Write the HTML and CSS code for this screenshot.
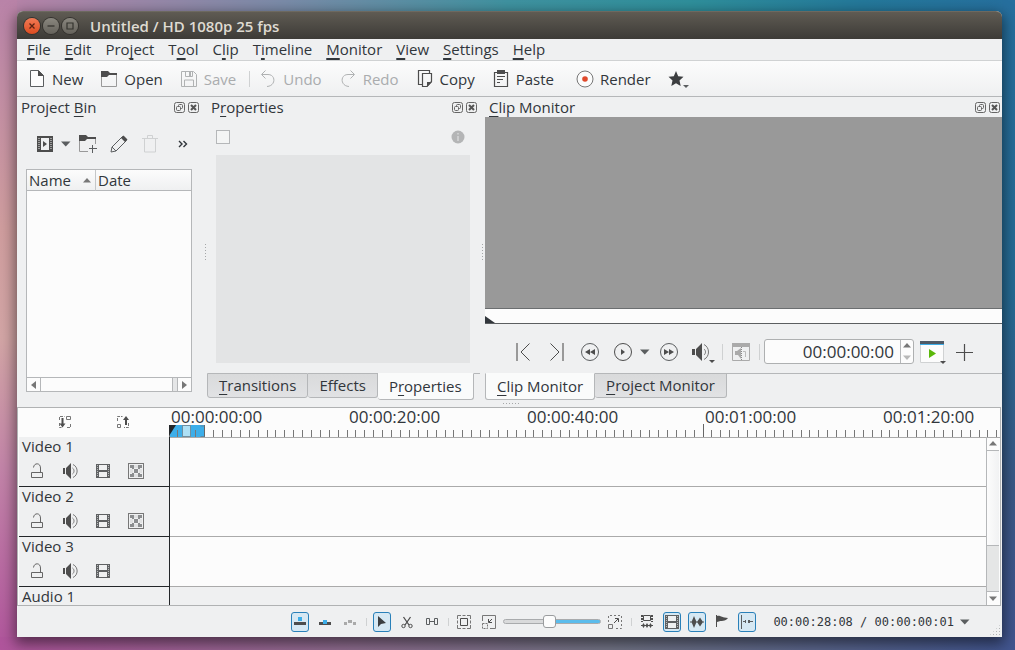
FILE: index.html
```html
<!DOCTYPE html>
<html lang="en">
<head>
<meta charset="utf-8">
<title>Untitled / HD 1080p 25 fps</title>
<link rel="stylesheet" href="styles.css">
</head>
<body>
<svg class="defs" aria-hidden="true">
  <symbol id="caret" viewBox="0 0 10 6"><path d="M0 .5h9.500L4.750 5.500z" fill="#5b5e60"/></symbol>
  <symbol id="tri-up" viewBox="0 0 8 5"><path d="M0 4.500h8L4 0z" fill="#777"/></symbol>
  <symbol id="tri-down" viewBox="0 0 8 5"><path d="M0 .5h8L4 5z" fill="#777"/></symbol>
  <symbol id="tri-left" viewBox="0 0 5 8"><path d="M5 0v8L0 4z" fill="#777"/></symbol>
  <symbol id="tri-right" viewBox="0 0 5 8"><path d="M0 0v8l5-4z" fill="#777"/></symbol>
  <symbol id="float" viewBox="0 0 11 11"><rect x=".5" y=".5" width="10" height="10" rx="2" fill="none" stroke="#666"/><rect x="4.500" y="2.500" width="4" height="4" rx="1" fill="none" stroke="#666"/><rect x="2.500" y="4.500" width="4" height="4" rx="1" fill="#eff0f1" stroke="#666"/></symbol>
  <symbol id="close" viewBox="0 0 11 11"><rect x=".5" y=".5" width="10" height="10" rx="2" fill="none" stroke="#666"/><path d="M3 3l5 5M8 3l-5 5" stroke="#555" stroke-width="2"/></symbol>
  <symbol id="lock" viewBox="0 0 16 16"><path d="M2.500 9.500h11v5h-11zM4.500 4.500c.5-5 7-5 7 .5v4.500" fill="none" stroke="#666"/></symbol>
  <symbol id="speaker" viewBox="0 0 16 16"><path d="M1 5h2v6H1zM4 5l5-5v16l-5-5z" fill="#4d4d4d"/><path d="M10.500 5c2 1.500 2 4.500 0 6M11 1.500c5.500 2.500 5.500 10.500 0 13" fill="none" stroke="#777"/></symbol>
  <symbol id="film" viewBox="0 0 16 16"><path d="M1 1h14v14H1z" fill="#5f6163"/><path d="M4 2h8v5H4zM4 9h8v5H4z" fill="#eff0f1"/><path d="M2.500 2v12M13.500 2v12" stroke="#b9bbbc" stroke-dasharray="1 1"/></symbol>
  <symbol id="alpha" viewBox="0 0 16 16"><rect x=".5" y=".5" width="15" height="15" fill="none" stroke="#777"/><path d="M2 2h4v3H2zM10 2h4v3h-4zM6 6h4v4H6zM2 11h4v3H2zM10 11h4v3h-4zM4 5h2v1H4zM10 5h2v1h-2zM4 10h2v1H4zM10 10h2v1h-2z" fill="#8b8d8f"/><path d="M6 2h4v3H6zM2 6h3v4H2zM11 6h3v4h-3zM6 11h4v3H6z" fill="#e0e1e2"/></symbol>
</svg>

<main class="window">
  <header class="titlebar">
    <button class="wm wm-close" aria-label="Close"><svg viewBox="0 0 16 16"><path d="M5.500 5.500l5 5M10.500 5.500l-5 5" stroke="#5a2313" stroke-width="1.300"/></svg></button>
    <button class="wm" aria-label="Minimize"><svg viewBox="0 0 16 16"><path d="M4.500 8h7" stroke="#35342f" stroke-width="1.300"/></svg></button>
    <button class="wm" aria-label="Maximize"><svg viewBox="0 0 16 16"><path d="M5 5h6v6H5z" fill="none" stroke="#35342f" stroke-width="1.200"/></svg></button>
    <h1 class="title">Untitled / HD 1080p 25 fps</h1>
  </header>

  <nav class="menubar">
    <button><u>F</u>ile</button><button><u>E</u>dit</button><button>Pro<u>j</u>ect</button><button>T<u>o</u>ol</button><button>C<u>l</u>ip</button><button>T<u>i</u>meline</button><button><u>M</u>onitor</button><button><u>V</u>iew</button><button><u>S</u>ettings</button><button><u>H</u>elp</button>
  </nav>

  <div class="toolbar">
    <button><svg class="ic18" viewBox="0 0 18 18"><path d="M2.500.5h8l5 5v11h-13z" fill="#fcfcfc" stroke="#5b5e60"/><path d="M10 0v6h6z" fill="#4d4d4d"/></svg>New</button>
    <button><svg class="ic18" viewBox="0 0 18 18"><path d="M1.500 3.500h15v13h-15z" fill="none" stroke="#999"/><path d="M1 1h7l2 2h7v2H9L7 7H1z" fill="#4d4d4d"/></svg>Open</button>
    <button disabled><svg class="ic18" viewBox="0 0 18 18"><path d="M1.500 1.500h12l3 3v12h-15zM5.500 1.500v5h7v-5M4.500 16v-6h9v6" fill="none" stroke="#b0b2b3"/><path d="M9 2h2v4H9z" fill="#b0b2b3"/></svg>Save</button>
    <span class="sep"></span>
    <button disabled><svg class="ic18" viewBox="0 0 18 18"><path d="M6.500.5l-4 4 4 4M3 4.500h6c8 0 8 11.500-1 12" fill="none" stroke="#b0b2b3"/></svg>Undo</button>
    <button disabled><svg class="ic18" viewBox="0 0 18 18"><path d="M11.500.5l4 4-4 4M15 4.500H9c-8 0-8 11.500 1 12" fill="none" stroke="#b0b2b3"/></svg>Redo</button>
    <button><svg class="ic18" viewBox="0 0 18 18"><path d="M6 14.500H2.500v-14h11V3M6.500 3.500h9v8l-4.500 5H6.500z" fill="none" stroke="#4d4d4d" stroke-width="1.200"/><path d="M11 17v-5h5z" fill="#4d4d4d"/></svg>Copy</button>
    <button><svg class="ic18" viewBox="0 0 18 18"><path d="M2.500 2.500h13v14h-13z" fill="none" stroke="#4d4d4d" stroke-width="1.200"/><path d="M5 0h8v4H5zM5 6h8v1H5zM5 9h6v1H5zM5 12h3v1H5z" fill="#4d4d4d"/></svg>Paste</button>
    <button class="render"><svg class="ic18" viewBox="0 0 18 18"><circle cx="9" cy="9" r="8" fill="#fcfcfc" stroke="#777"/><circle cx="9" cy="9" r="2.800" fill="#e04a2c"/></svg>Render</button>
    <button class="fav" aria-label="Favorites"><svg viewBox="0 0 22 18"><path d="M8 1l2.200 5.200 5.300.6-4 3.700 1.200 5.500L8 13.200 3.300 16l1.200-5.500-4-3.700 5.300-.6z" fill="#3c3e40"/><path d="M15 15h6l-3 3z" fill="#5b5e60"/></svg></button>
  </div>

  <div class="docks">
    <section class="dock bin">
      <header class="dock-head"><h2>Project <u>B</u>in</h2><button aria-label="Float"><svg><use href="#float"/></svg></button><button aria-label="Close dock"><svg><use href="#close"/></svg></button></header>
      <div class="bin-tools">
        <button aria-label="Add clip"><svg class="ic18" viewBox="0 0 18 18"><path d="M1 1h16v16H1z" fill="#4d4d4d"/><path d="M5 3h8v12H5z" fill="#eff0f1"/><path d="M3 3v12M15 3v12" stroke="#eff0f1" stroke-dasharray="1 1"/><path d="M7 6v6l4-3z" fill="#4d4d4d"/></svg></button>
        <button aria-label="Add clip menu"><svg class="caret"><use href="#caret"/></svg></button>
        <button aria-label="Create folder"><svg class="ic18" viewBox="0 0 18 18"><path d="M9 16.500H.5v-13h16V9" fill="none" stroke="#999"/><path d="M0 0h7l2 2h8v2H8L6 6H0z" fill="#4d4d4d"/><path d="M10 13.500h8M13.500 10v8" stroke="#5b5e60"/></svg></button>
        <button aria-label="Edit clip"><svg class="ic18" viewBox="0 0 18 18"><path d="M1 17l1-5L12.500 1.500l4 4L6 16zM2 12l4 4" fill="none" stroke="#5b5e60"/><path d="M11 3l2.500-2.500 4 4L15 7z" fill="#4d4d4d"/></svg></button>
        <button disabled aria-label="Delete"><svg class="ic18" viewBox="0 0 18 18"><path d="M1 3.500h16M6.500 3V.5h5V3M3.500 4v13h11V4" fill="none" stroke="#cfd1d2"/></svg></button>
        <button class="more" aria-label="More"><svg viewBox="0 0 10 8"><path d="M1 1l3 3-3 3M5.500 1l3 3-3 3" fill="none" stroke="#31363b" stroke-width="1.400"/></svg></button>
      </div>
      <div class="bin-list">
        <table>
          <thead><tr><th class="name"><span>Name<svg class="tri-h"><use href="#tri-up"/></svg></span></th><th>Date</th></tr></thead>
        </table>
        <div class="hscroll"><button aria-label="Scroll left"><svg class="tri-v"><use href="#tri-left"/></svg></button><span class="hthumb"></span><button aria-label="Scroll right"><svg class="tri-v"><use href="#tri-right"/></svg></button></div>
      </div>
    </section>
    <div class="splitter"><span></span></div>
    <section class="dock props">
      <header class="dock-head"><h2>P<u>r</u>operties</h2><button aria-label="Float"><svg><use href="#float"/></svg></button><button aria-label="Close dock"><svg><use href="#close"/></svg></button></header>
      <div class="props-tools"><input type="checkbox" aria-label="Enable effects"><svg class="info" viewBox="0 0 14 14"><circle cx="7" cy="7" r="6.500" fill="#b4b5b6"/><path d="M7 3v1.500M7 6v5" stroke="#d5d6d7" stroke-width="1.500"/></svg></div>
      <div class="props-body"></div>
      <div class="tabs" role="tablist"><button role="tab"><u>T</u>ransitions</button><button role="tab">Effects</button><button role="tab" class="active" aria-selected="true">P<u>r</u>operties</button><span class="tab-rest"></span></div>
    </section>
    <div class="splitter"><span></span></div>
    <section class="dock monitor">
      <header class="dock-head"><h2><u>C</u>lip Monitor</h2><button aria-label="Float"><svg><use href="#float"/></svg></button><button aria-label="Close dock"><svg><use href="#close"/></svg></button></header>
      <div class="screen"></div>
      <div class="seek"><svg viewBox="0 0 10 7"><path d="M0 0l10 7H0z" fill="#31363b"/></svg></div>
      <div class="controls">
        <button aria-label="Zone start"><svg viewBox="0 0 20 20"><path d="M3 1v18" stroke="#999" stroke-width="2"/><path d="M15.500 1.500L7 10l8.500 8.500" fill="none" stroke="#4d4d4d"/></svg></button>
        <button aria-label="Zone end"><svg viewBox="0 0 20 20"><path d="M16 1v18" stroke="#999" stroke-width="2"/><path d="M3.500 1.500L12 10l-8.500 8.500" fill="none" stroke="#4d4d4d"/></svg></button>
        <button aria-label="Rewind"><svg viewBox="0 0 20 20"><circle cx="10" cy="10" r="8.500" fill="none" stroke="#5b5e60"/><path d="M10 7v6l-5-3zM15 7v6l-5-3z" fill="#4d4d4d"/></svg></button>
        <button aria-label="Play"><svg viewBox="0 0 20 20"><circle cx="10" cy="10" r="8.500" fill="none" stroke="#4d4d4d"/><path d="M8 7v6l4-3z" fill="#4d4d4d"/></svg></button>
        <button class="play-menu" aria-label="Play menu"><svg class="caret"><use href="#caret"/></svg></button>
        <button aria-label="Forward"><svg viewBox="0 0 20 20"><circle cx="10" cy="10" r="8.500" fill="none" stroke="#5b5e60"/><path d="M10 7v6l5-3zM5 7v6l5-3z" fill="#4d4d4d"/></svg></button>
        <button class="vol" aria-label="Volume"><svg viewBox="0 0 24 20"><path d="M0 7h3v6H0zM4 7l6-6v18l-6-6z" fill="#4d4d4d"/><path d="M12 7c2 1.500 2 4.500 0 6M12 2.500c6 3 6 12 0 15" fill="none" stroke="#777"/><path d="M17 18h6l-3 3z" fill="#4d4d4d"/></svg></button>
        <span class="sep"></span>
        <button disabled aria-label="Split view"><svg viewBox="0 0 20 20"><path d="M1.500 1.500h17v17h-17z" fill="none" stroke="#aaa"/><path d="M1 1h18v4H1zM4 9h2l4-3v11l-3-4H4z" fill="#aaa"/><path d="M10.500 5v14" stroke="#888" stroke-dasharray="1 1"/><path d="M12 9.500h2.500V15" fill="none" stroke="#bbb"/></svg></button>
        <span class="sep"></span>
        <div class="spin"><input type="text" value="00:00:00:00" aria-label="Position"><div class="spin-btns"><button aria-label="Up"><svg class="tri-h"><use href="#tri-up"/></svg></button><button disabled aria-label="Down"><svg class="tri-h"><use href="#tri-down"/></svg></button></div></div>
        <button class="zoneplay" aria-label="Play zone"><svg viewBox="0 0 26 22"><path d="M0 0h24v22H0z" fill="#fcfcfc"/><path d="M0 0h24v3H0z" fill="#4f5a66"/><path d="M0 3h24v1H0z" fill="#3daee9"/><path d="M.5 4v17.500h23V4" fill="none" stroke="#d0d2d3"/><path d="M9 8v9l7-4.500z" fill="#5ab80a"/><path d="M20 20h6l-3 3z" fill="#4d4d4d"/></svg></button>
        <button aria-label="Add"><svg viewBox="0 0 20 20"><path d="M2 10.500h17M10.500 2v17" stroke="#4d4d4d" stroke-width="1.200"/></svg></button>
      </div>
      <div class="tabs" role="tablist"><button role="tab" class="active" aria-selected="true"><u>C</u>lip Monitor</button><button role="tab"><u>P</u>roject Monitor</button><span class="tab-rest"></span></div>
    </section>
    <span class="hgrip"></span>
  </div>

  <section class="timeline">
    <div class="ruler-row">
      <div class="head-tools">
        <button aria-label="Insert zone"><svg viewBox="0 0 14 14"><path d="M1.500 5v-3.500h5M1.500 8v4.500h2M9 12.500h3.500V8" fill="none" stroke="#777" stroke-dasharray="3 1"/><path d="M8.500 1.500h4v3h-4z" fill="none" stroke="#777"/><path d="M4.500 3v7" stroke="#4d4d4d" stroke-width="2"/><path d="M1.500 8.500h6l-3 4z" fill="#4d4d4d"/></svg></button>
        <button aria-label="Extract zone"><svg viewBox="0 0 14 14"><path d="M1.500 6V1.500h5M12.500 8v4.500H8" fill="none" stroke="#777" stroke-dasharray="3 1"/><path d="M1.500 9.500h3v3h-3z" fill="none" stroke="#777"/><path d="M10 10V4" stroke="#4d4d4d" stroke-width="2"/><path d="M7 5h6l-3-4z" fill="#4d4d4d"/></svg></button>
      </div>
      <div class="ruler">
        <div class="times"><span>00:00:00:00</span><span>00:00:20:00</span><span>00:00:40:00</span><span>00:01:00:00</span><span>00:01:20:00</span></div>
        <svg class="ticks"><defs><pattern id="t" width="178" height="14" patternUnits="userSpaceOnUse"><path d="M0 7h1v7h-1zM8 7h1v7h-1zM17 7h1v7h-1zM26 7h1v7h-1zM35 7h1v7h-1zM44 7h1v7h-1zM53 7h1v7h-1zM62 7h1v7h-1zM71 7h1v7h-1zM80 7h1v7h-1zM89 7h1v7h-1zM98 7h1v7h-1zM106 7h1v7h-1zM115 7h1v7h-1zM124 7h1v7h-1zM133 7h1v7h-1zM142 7h1v7h-1zM151 7h1v7h-1zM160 7h1v7h-1zM169 7h1v7h-1z" fill="#777"/></pattern></defs><rect width="36" height="12" y="2" fill="#3daee9"/><rect width="100%" height="14" fill="url(#t)"/><path d="M534 1h1v13h-1zM35 2h1v12h-1z" fill="#666"/><path d="M31.500 3h4M31.500 13.500h4" stroke="#5f87a0"/><rect x="13.500" y="2.500" width="8" height="11" fill="#aee0f5" stroke="#6f8fa0"/><path d="M0 2h7L0 13z" fill="#232629"/></svg>
      </div>
    </div>
    <div class="tracks">
      <div class="track-list">
        <div class="track"><div class="track-head"><h3>Video 1</h3><div class="track-icons"><button aria-label="Lock"><svg><use href="#lock"/></svg></button><button aria-label="Mute"><svg><use href="#speaker"/></svg></button><button aria-label="Hide"><svg><use href="#film"/></svg></button><button aria-label="Composite"><svg><use href="#alpha"/></svg></button></div></div><div class="lane"></div></div>
        <div class="track"><div class="track-head"><h3>Video 2</h3><div class="track-icons"><button aria-label="Lock"><svg><use href="#lock"/></svg></button><button aria-label="Mute"><svg><use href="#speaker"/></svg></button><button aria-label="Hide"><svg><use href="#film"/></svg></button><button aria-label="Composite"><svg><use href="#alpha"/></svg></button></div></div><div class="lane"></div></div>
        <div class="track"><div class="track-head"><h3>Video 3</h3><div class="track-icons"><button aria-label="Lock"><svg><use href="#lock"/></svg></button><button aria-label="Mute"><svg><use href="#speaker"/></svg></button><button aria-label="Hide"><svg><use href="#film"/></svg></button></div></div><div class="lane"></div></div>
        <div class="track audio"><div class="track-head"><h3>Audio 1</h3></div><div class="lane"></div></div>
      </div>
      <div class="vscroll"><button aria-label="Scroll up"><svg class="tri-h"><use href="#tri-up"/></svg></button><span class="vthumb"></span><span class="vgroove"></span><button aria-label="Scroll down"><svg class="tri-h"><use href="#tri-down"/></svg></button></div>
    </div>
  </section>

  <footer class="status">
    <button class="on" aria-label="Normal edit"><svg viewBox="0 0 16 16"><path d="M6 3h4v4H6z" fill="#3daee9"/><path d="M2 8h12v3H2z" fill="#4d4d4d"/></svg></button>
    <button aria-label="Overwrite edit"><svg viewBox="0 0 16 16"><path d="M2 8h12v3H2z" fill="#4d4d4d"/><path d="M6 6h4v4H6z" fill="#3daee9"/></svg></button>
    <button disabled aria-label="Insert edit"><svg viewBox="0 0 16 16"><path d="M2 8h3v3H2zM6 6h4v3H6zM11 8h3v3h-3z" fill="#aaa"/></svg></button>
    <span class="sep"></span>
    <button class="on" aria-label="Selection"><svg viewBox="0 0 16 16"><path d="M4 2v11l3-3 5-1z" fill="#3c3e40"/></svg></button>
    <button aria-label="Razor"><svg viewBox="0 0 16 16"><path d="M4.500 3l5.500 8M11.500 3L6 11" stroke="#4d4d4d" stroke-width="1.300"/><circle cx="4.500" cy="12" r="1.700" fill="none" stroke="#4d4d4d"/><circle cx="11.500" cy="12" r="1.700" fill="none" stroke="#4d4d4d"/></svg></button>
    <button aria-label="Spacer"><svg viewBox="0 0 16 16"><path d="M2.500 4.500h3v6h-3zM10.500 4.500h3v6h-3zM6 7.500h4" fill="none" stroke="#5b5e60"/></svg></button>
    <span class="sep"></span>
    <button aria-label="Fit zoom"><svg viewBox="0 0 16 16"><path d="M1.500 5V1.500H5M11 1.500h3.500V5M14.500 11v3.500H11M5 14.500H1.500V11M6.500 1.500h3M6.500 14.500h3M1.500 6.500v3M14.500 6.500v3" fill="none" stroke="#777"/><path d="M4.500 4.500h7v7h-7z" fill="none" stroke="#4d4d4d"/></svg></button>
    <button aria-label="Zoom out"><svg viewBox="0 0 16 16"><path d="M1.500 7V1.500h13v13H9" fill="none" stroke="#777"/><path d="M1.500 9.500h5v5h-5z" fill="none" stroke="#777" stroke-dasharray="2 1"/><path d="M11 5L8 8M7.500 5v3.500H11" fill="none" stroke="#4d4d4d"/></svg></button>
    <input class="zoom" type="range" min="0" max="100" value="46" aria-label="Zoom">
    <button aria-label="Zoom in"><svg viewBox="0 0 16 16"><path d="M1.500 8V1.500h13v13H8" fill="none" stroke="#777" stroke-dasharray="2 2"/><path d="M1.500 10.500h4v4h-4z" fill="none" stroke="#777"/><path d="M7 9l4-4M8 4.500h3.500V8" fill="none" stroke="#4d4d4d"/></svg></button>
    <span class="sep"></span>
    <button aria-label="Split audio"><svg viewBox="0 0 16 16"><path d="M4.500 1.500h7v5h-7z" fill="none" stroke="#4d4d4d"/><path d="M3 1v7M13 1v7" stroke="#4d4d4d" stroke-width="2" stroke-dasharray="2 1"/><path d="M2 11.500h12" stroke="#4d4d4d"/><path d="M4.500 9L6 11.500 4.500 14 3 11.500zM8 9l1.500 2.500L8 14l-1.500-2.500zM11.500 9l1.500 2.500-1.500 2.500-1.500-2.500z" fill="#4d4d4d"/></svg></button>
    <button class="on" aria-label="Video thumbnails"><svg><use href="#film"/></svg></button>
    <button class="on" aria-label="Audio thumbnails"><svg viewBox="0 0 16 16"><path d="M1 7.500h14v1H1zM5 2l2.500 6L5 14 2.500 8zM11 3.500L14 8l-3 4.500L8 8z" fill="#4d4d4d"/></svg></button>
    <button aria-label="Show markers"><svg viewBox="0 0 16 16"><path d="M2 1h1v12H2zM3 2c3-1 5 2 11 2-3 4-6 2-11 4z" fill="#4d4d4d"/></svg></button>
    <button class="on" aria-label="Snap"><svg viewBox="0 0 16 16"><path d="M2.500 1v14M4 7.500h3M9 7.500h5" stroke="#5b5e60"/><path d="M6 6h1v3H6zM9 6h2v3H9z" fill="#5b5e60"/></svg></button>
    <button class="timecode">00:00:28:08 / 00:00:00:01<svg class="caret"><use href="#caret"/></svg></button>
    <span class="sizegrip"></span>
  </footer>
</main>
</body>
</html>
```
FILE: styles.css
```css
* { box-sizing: border-box; }

body {
  margin: 0;
  padding: 11px 13px 13px 17px;
  height: 100vh;
  overflow: hidden;
  font: 15px/20px "Open Sans", "Noto Sans", sans-serif;
  color: #31363b;
  background:
    linear-gradient(90deg, #b0559c 0, #8f6e90 35%, #737587 60%, #41558f 100%) bottom / 100% 13px no-repeat,
    linear-gradient(180deg, #b983a8 0, #cf9d9e 35%, #d2a5a5 52%, #c284a8 72%, #b0559c 100%) left / 17px 100% no-repeat,
    linear-gradient(180deg, #266f9e 0, #256b94 45%, #3a5886 75%, #41558f 100%) right / 13px 100% no-repeat,
    linear-gradient(90deg, #b983a8 0, #7a8ba8 28%, #3f92a0 50%, #2f8f9b 68%, #24789a 85%, #266f9e 100%);
}

button {
  display: inline-flex;
  align-items: center;
  padding: 0;
  border: 0;
  background: none;
  font: inherit;
  color: inherit;
}

svg { display: block; }
u { text-underline-offset: 3px; text-decoration-thickness: 1px; text-decoration-skip-ink: none; }
h1, h2, h3 { margin: 0; font: inherit; }
.defs { position: absolute; width: 0; height: 0; }
.ic18 { width: 18px; height: 18px; }
.caret { width: 10px; height: 6px; }
.tri-h { width: 8px; height: 5px; }
.tri-v { width: 5px; height: 8px; }
.sep { width: 1px; height: 16px; background: #cfd1d2; }

.window {
  display: flex;
  flex-direction: column;
  height: 100%;
  background: #eff0f1;
  border-radius: 6px 6px 0 0;
  box-shadow: 0 5px 14px 2px rgba(0, 0, 0, .5);
}

.titlebar {
  display: flex;
  align-items: center;
  gap: 3px;
  height: 28px;
  padding: 0 7px;
  border-radius: 6px 6px 0 0;
  background: linear-gradient(#5f5b53, #3d3b37);
  border-top: 1px solid #6d6960;
  color: #dfdbd2;
}
.wm { width: 16px; height: 16px; border-radius: 50%; background: linear-gradient(#8a877f, #65625b); box-shadow: 0 0 0 1px #34322e; }
.wm-close { background: linear-gradient(#f37b56, #dd4c20); }
.wm svg { width: 16px; height: 16px; }
.title { margin-left: 9px; font-weight: 600; }

.menubar { display: flex; gap: 14px; height: 22px; padding: 0 10px 2px; border-bottom: 1px solid #d0d2d3; }
.menubar u { text-decoration-thickness: 2px; }

.toolbar {
  display: flex;
  align-items: center;
  gap: 17px;
  height: 36px;
  padding: 0 11px;
  background: linear-gradient(#fcfcfc, #eff0f1);
  border-bottom: 1px solid #b5b7b9;
}
.toolbar button { gap: 6px; }
.toolbar button:disabled { color: #aaacae; }
.toolbar .sep { margin: 0 -8px 0 -4px; }
.toolbar .render { margin-left: 5px; }
.fav svg { width: 22px; height: 18px; }

.docks { position: relative; display: flex; flex: 1; min-height: 0; }
.dock { display: flex; flex-direction: column; min-width: 0; }
.bin { width: 186px; padding-left: 4px; }
.props { width: 273px; }
.monitor { flex: 1; }
.dock-head { display: flex; align-items: center; gap: 3px; height: 20px; padding-right: 4px; }
.props .dock-head, .monitor .dock-head { padding-left: 4px; }
.props .dock-head { padding-right: 3px; }
.monitor .dock-head { padding-right: 2px; }
.dock-head h2 { flex: 1; }
.dock-head svg { width: 11px; height: 11px; }
.splitter { display: flex; align-items: center; justify-content: center; width: 4px; }
.props + .splitter { width: 5px; }
.splitter span { width: 1px; height: 16px; background: repeating-linear-gradient(#a5a7a8 0 1px, transparent 1px 3px); }
.hgrip { position: absolute; left: 50%; bottom: 3px; width: 16px; height: 1px; margin-left: -7px; background: repeating-linear-gradient(90deg, #a5a7a8 0 1px, transparent 1px 3px); }

.bin-tools { display: flex; align-items: center; height: 54px; padding: 0 15px; }
.bin-tools button + button { margin-left: 13px; }
.bin-tools button:nth-child(2) { margin-left: 7px; }
.bin-tools button:nth-child(3) { margin-left: 8px; }
.bin-tools button.more { margin-left: auto; }
.more svg { width: 10px; height: 8px; }
.bin-list { display: flex; flex-direction: column; flex: 1; margin: -2px 11px 15px 5px; border: 1px solid #b5b7b9; background: #fcfcfc; }
.bin-list table { width: 100%; border-collapse: separate; border-spacing: 0; }
.bin-list th { height: 21px; padding: 0 2px; text-align: left; font-weight: 400; background: linear-gradient(#fcfcfc, #eff0f1); border-bottom: 1px solid #b5b7b9; }
.bin-list .name { width: 69px; border-right: 1px solid #c5c7c8; padding: 0 4px 0 2px; }
.name span { display: flex; align-items: center; justify-content: space-between; }
.hscroll { display: flex; align-items: stretch; height: 14px; margin-top: auto; border-top: 1px solid #b5b7b9; }
.hscroll button { width: 13px; justify-content: center; }
.hthumb { flex: 1; border: solid #b5b7b9; border-width: 0 1px; background: linear-gradient(90deg, transparent calc(100% - 5px), #b5b7b9 0, #b5b7b9 calc(100% - 4px), #e5e6e7 0); }

.props-tools { display: flex; align-items: center; justify-content: space-between; height: 38px; padding: 2px 15px 0 9px; }
.props-tools input { appearance: none; width: 14px; height: 14px; margin: 0; border: 1px solid #b5b7b9; background: #f4f5f5; }
.info { width: 14px; height: 14px; }
.props-body { flex: 1; margin: 0 10px 10px 9px; background: #e3e4e5; }

.tabs { display: flex; align-items: flex-start; height: 34px; }
.tabs button { height: 25px; padding: 0 11px 2px; border: 1px solid #b5b7b9; border-left-width: 0; border-radius: 0 0 3px 3px; background: linear-gradient(#d9dadb, #e1e2e4); }
.tabs button:first-child { border-left-width: 1px; }
.tabs .active { height: 27px; background: #fafbfb; border-top-color: transparent; }
.tab-rest { flex: 1; border-top: 1px solid #b5b7b9; }

.screen { flex: 1; background: #999; border-bottom: 1px solid #6b6e70; }
.seek { display: flex; align-items: flex-end; height: 15px; background: #fcfcfc; border-bottom: 1px solid #5b5e60; }
.seek svg { width: 10px; height: 7px; }
.controls { display: flex; align-items: center; height: 49px; padding: 7px 28px 1px 29px; }
.controls svg { flex: none; }
.controls > button { margin-right: 13px; }
.controls > button > svg { width: 20px; height: 20px; }
.controls .play-menu { margin-right: 9px; }
.controls > button:nth-child(4) { margin-right: 7px; }
.controls > .play-menu > svg { width: 10px; height: 6px; }
.controls > .vol { margin: 0 6px 0 0; }
.controls > .vol > svg { width: 24px; overflow: visible; }
.controls > button:disabled { margin: 0 8px; }
.spin { display: flex; flex: 1; min-width: 120px; height: 25px; margin: 0 6px 0 4px; border: 1px solid #aeb0b1; border-radius: 3px; background: #fcfcfc; }
.spin input { flex: 1; width: 0; padding: 0 6px; border: 0; background: none; font: 17px/22px "Open Sans", sans-serif; color: inherit; text-align: right; }
.spin-btns { display: flex; flex-direction: column; justify-content: space-around; width: 13px; border-left: 1px solid #b5b7b9; }
.spin-btns button { justify-content: center; }
.spin-btns button:disabled { opacity: .5; }
.controls > .zoneplay { margin-right: 8px; }
.controls > .zoneplay > svg { width: 26px; height: 22px; overflow: visible; }
.controls > button:last-child { margin-right: 0; }

.timeline { display: flex; flex-direction: column; height: 199px; margin-right: 1px; padding-left: 1px; border: 1px solid #b0b2b3; background: #fcfcfc; }
.ruler-row { display: flex; height: 30px; }
.head-tools { display: flex; width: 150px; padding: 0 39px 2px; justify-content: space-between; }
.head-tools svg { width: 14px; height: 14px; }
.ruler { flex: 1; min-width: 0; border-bottom: 1px solid #aaa; }
.times { display: flex; height: 15px; font-size: 17px; line-height: 17px; }
.times span { flex: 0 0 178px; padding-left: 2px; }
.times span:last-child { flex: none; }
.ticks { width: 100%; height: 14px; }

.tracks { display: flex; flex: 1; min-height: 0; margin-top: -1px; padding-right: 1px; }
.track-list { flex: 1; overflow: hidden; }
.track { display: flex; height: 50px; }
.track-head { width: 151px; padding-left: 3px; background: #eff0f1; border-right: 1px solid #232629; border-bottom: 1px solid #232629; }
.track-head h3 { line-height: 18px; }
.track-icons { display: flex; gap: 17px; padding: 8px 7px 0; }
.track-icons svg { width: 16px; height: 16px; }
.lane { flex: 1; border-bottom: 1px solid #aaa; }
.audio .lane { background: #eff0f1; }
.vscroll { display: flex; flex-direction: column; width: 13px; border-left: 1px solid #b5b7b9; }
.vscroll button { height: 13px; justify-content: center; }
.vthumb { flex: 95; border: solid #b5b7b9; border-width: 1px 0; background: linear-gradient(90deg, #fcfcfc, #f1f2f3); }
.vgroove { flex: 46; background: #e5e6e6; border-bottom: 1px solid #b5b7b9; }

.status { position: relative; display: flex; align-items: center; justify-content: flex-end; gap: 7px; height: 31px; padding-right: 32px; }
.status > button:not(.timecode) { justify-content: center; width: 18px; height: 20px; }
.status button > svg:not(.caret) { flex: none; width: 16px; height: 16px; }
.status .on { border: 1px solid #2980b9; border-radius: 3px; background: #d6e8f3; }
.status .sep { height: 8px; margin-right: -1px; }
.status .timecode { gap: 6px; margin-left: 10px; font: 12px/16px "DejaVu Sans Mono", monospace; }
.zoom { appearance: none; width: 98px; height: 14px; margin: 0 -2px; background: none; }
.zoom::-webkit-slider-runnable-track { height: 5px; border: 1px solid #a9abad; border-radius: 3px; background: linear-gradient(90deg, #d9dadb 46%, #5bbcec 46%); }
.zoom::-webkit-slider-thumb { appearance: none; width: 13px; height: 13px; margin-top: -5px; border: 1px solid #9a9c9e; border-radius: 3px; background: #fcfcfc; }
.sizegrip { position: absolute; right: 1px; bottom: 1px; width: 12px; height: 12px; background: radial-gradient(#b0b2b3 1px, transparent 1px) 0 0 / 3px 3px; clip-path: polygon(100% 0, 100% 100%, 0 100%); }
```
